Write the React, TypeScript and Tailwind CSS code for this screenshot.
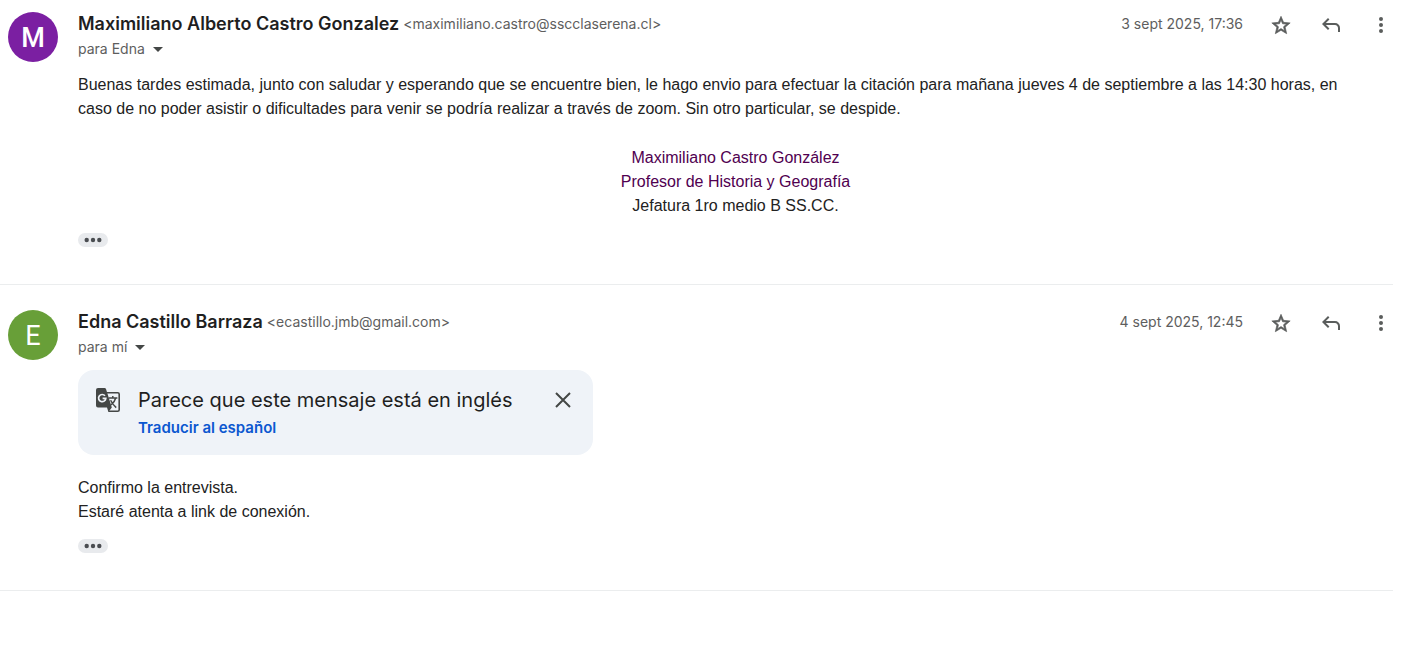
import type { ReactNode } from "react";

function IconButton({ label, children }: { label: string; children: ReactNode }) {
  return (
    <button
      type="button"
      aria-label={label}
      className="flex size-[25px] items-center justify-center text-[#5a5d5c]"
    >
      {children}
    </button>
  );
}

function StarIcon() {
  return (
    <svg viewBox="0 0 24 24" className="size-[22px]" fill="currentColor" stroke="currentColor" strokeWidth="0.7" aria-hidden="true">
      <path d="M22 9.74l-7.19-.62L12 2.5 9.19 9.13 2 9.74l5.46 4.73L5.82 21.5 12 17.77l6.18 3.73-1.63-7.03L22 9.74zM12 15.9l-3.76 2.27 1-4.28-3.32-2.88 4.38-.38L12 6.6l1.71 4.04 4.38.38-3.32 2.88 1 4.28L12 15.9z" />
    </svg>
  );
}

function ReplyIcon() {
  return (
    <svg viewBox="0 -960 960 960" className="size-6" fill="currentColor" aria-hidden="true">
      <path d="M760-200v-160q0-50-35-85t-85-35H273l144 144-57 56-240-240 240-240 57 56-144 144h367q83 0 141.5 58.5T840-360v160h-80Z" />
    </svg>
  );
}

function MoreIcon() {
  return (
    <svg viewBox="0 0 24 24" className="size-6" fill="currentColor" aria-hidden="true">
      <circle cx="12" cy="6" r="2" />
      <circle cx="12" cy="12" r="2" />
      <circle cx="12" cy="18" r="2" />
    </svg>
  );
}

function TranslateIcon() {
  return (
    <svg viewBox="0 0 24 24" className="mt-[2px] size-6 shrink-0" fill="none" aria-hidden="true">
      <path d="M9 4.7H21.7A1.5 1.5 0 0 1 23.2 6.2V21.7A1.5 1.5 0 0 1 21.7 23.2H12.5" stroke="#444746" strokeWidth="1.6" />
      <path d="M2 0H8.6A1.5 1.5 0 0 1 10 1L15.8 19.6L12.4 24L11 19.6H2A2 2 0 0 1 0 17.6V2A2 2 0 0 1 2 0Z" fill="#444746" />
      <path d="M9 7.8A3.6 3.6 0 1 0 9.8 10.4H6.6" stroke="#eff3f8" strokeWidth="1.7" />
      <path
        d="M12.6 10H21.4M16.8 8V10M19.6 10.2C18.8 13.4 16.8 15.6 15 17M14.6 12.2C15.8 14.8 17.8 17.4 20.2 19.6"
        stroke="#444746"
        strokeWidth="1.5"
      />
    </svg>
  );
}

function TrimmedContentButton() {
  return (
    <button
      type="button"
      aria-label="Mostrar contenido recortado"
      className="mt-[15px] flex h-[14px] w-[30px] items-center justify-center rounded-full bg-[#e8eaed] text-[#4a4d51]"
    >
      <svg viewBox="0 0 18 6" className="h-[6px] w-[18px]" fill="currentColor" aria-hidden="true">
        <circle cx="2.7" cy="3" r="2.2" />
        <circle cx="9" cy="3" r="2.2" />
        <circle cx="15.3" cy="3" r="2.2" />
      </svg>
    </button>
  );
}

type MessageProps = {
  initial: string;
  avatarClass: string;
  spacingClass: string;
  name: string;
  email: string;
  recipient: string;
  date: string;
  children: ReactNode;
};

function Message({ initial, avatarClass, spacingClass, name, email, recipient, date, children }: MessageProps) {
  return (
    <article className={`flex border-b border-[#ebedee] pb-[37px] pl-2 ${spacingClass}`}>
      <div
        className={`flex size-[50px] shrink-0 items-center justify-center rounded-full pt-[2px] font-['Roboto',sans-serif] text-[27px] text-white ${avatarClass}`}
      >
        {initial}
      </div>
      <div className="ml-5 min-w-0 flex-1">
        <header className="flex items-start justify-between font-['Inter',sans-serif]">
          <div>
            <div className="flex items-center gap-1 leading-6">
              <h3 className="text-[18px] font-semibold text-[#1f1f1f]">{name}</h3>
              <span className="text-[14px] text-[#5e5e5e]">&lt;{email}&gt;</span>
            </div>
            <button type="button" className="flex items-center gap-2 text-[14px] leading-[26px] text-[#5e5e5e]">
              {recipient}
              <svg viewBox="0 0 10 5" className="h-[5px] w-[10px]" fill="#444746" aria-hidden="true">
                <path d="M0 0h10L5 5z" />
              </svg>
            </button>
          </div>
          <div className="flex items-start gap-[25px]">
            <time className="text-[14px] leading-6 text-[#5e5e5e]">{date}</time>
            <IconButton label="Destacar">
              <StarIcon />
            </IconButton>
            <IconButton label="Responder">
              <ReplyIcon />
            </IconButton>
            <IconButton label="Más opciones">
              <MoreIcon />
            </IconButton>
          </div>
        </header>
        {children}
      </div>
    </article>
  );
}

export default function App() {
  return (
    <main className="min-h-screen bg-white pr-[14px] font-['Liberation_Sans',Arial,sans-serif] text-[16px] leading-6 text-[#222222]">
      <Message
        initial="M"
        avatarClass="bg-[#7b1fa2] font-medium"
        spacingClass="pt-3"
        name="Maximiliano Alberto Castro Gonzalez"
        email="maximiliano.castro@sscclaserena.cl"
        recipient="para Edna"
        date="3 sept 2025, 17:36"
      >
        <p className="mt-[11px] pr-6">
          Buenas tardes estimada, junto con saludar y esperando que se encuentre bien, le hago envio para efectuar la
          citación para mañana jueves 4 de septiembre a las 14:30 horas, en caso de no poder asistir o dificultades para
          venir se podría realizar a través de zoom. Sin otro particular, se despide.
        </p>
        <div className="mt-[25px] text-center">
          <p className="text-[#500050]">Maximiliano Castro González</p>
          <p className="text-[#500050]">Profesor de Historia y Geografía</p>
          <p>Jefatura 1ro medio B SS.CC.</p>
        </div>
        <TrimmedContentButton />
      </Message>

      <Message
        initial="E"
        avatarClass="bg-[#689f38]"
        spacingClass="pt-[25px]"
        name="Edna Castillo Barraza"
        email="ecastillo.jmb@gmail.com"
        recipient="para mí"
        date="4 sept 2025, 12:45"
      >
        <section className="mt-[10px] flex w-[515px] max-w-full items-start rounded-2xl bg-[#eff3f8] pt-4 pr-[17px] pb-[14px] pl-[18px] font-['Inter',sans-serif]">
          <TranslateIcon />
          <div className="ml-[18px] flex-1">
            <h4 className="text-[20px] leading-7 text-[#1f1f1f]">Parece que este mensaje está en inglés</h4>
            <a href="#traducir" className="block text-[15px] leading-[27px] font-semibold text-[#0b57d0]">
              Traducir al español
            </a>
          </div>
          <button type="button" aria-label="Cerrar" className="mt-px flex size-[26px] items-center justify-center">
            <svg viewBox="0 0 16 16" className="size-4" fill="none" stroke="#444746" strokeWidth="2" aria-hidden="true">
              <path d="M1 1l14 14M15 1L1 15" />
            </svg>
          </button>
        </section>
        <div className="mt-[21px]">
          <p>Confirmo la entrevista.</p>
          <p>Estaré atenta a link de conexión.</p>
        </div>
        <TrimmedContentButton />
      </Message>
    </main>
  );
}
